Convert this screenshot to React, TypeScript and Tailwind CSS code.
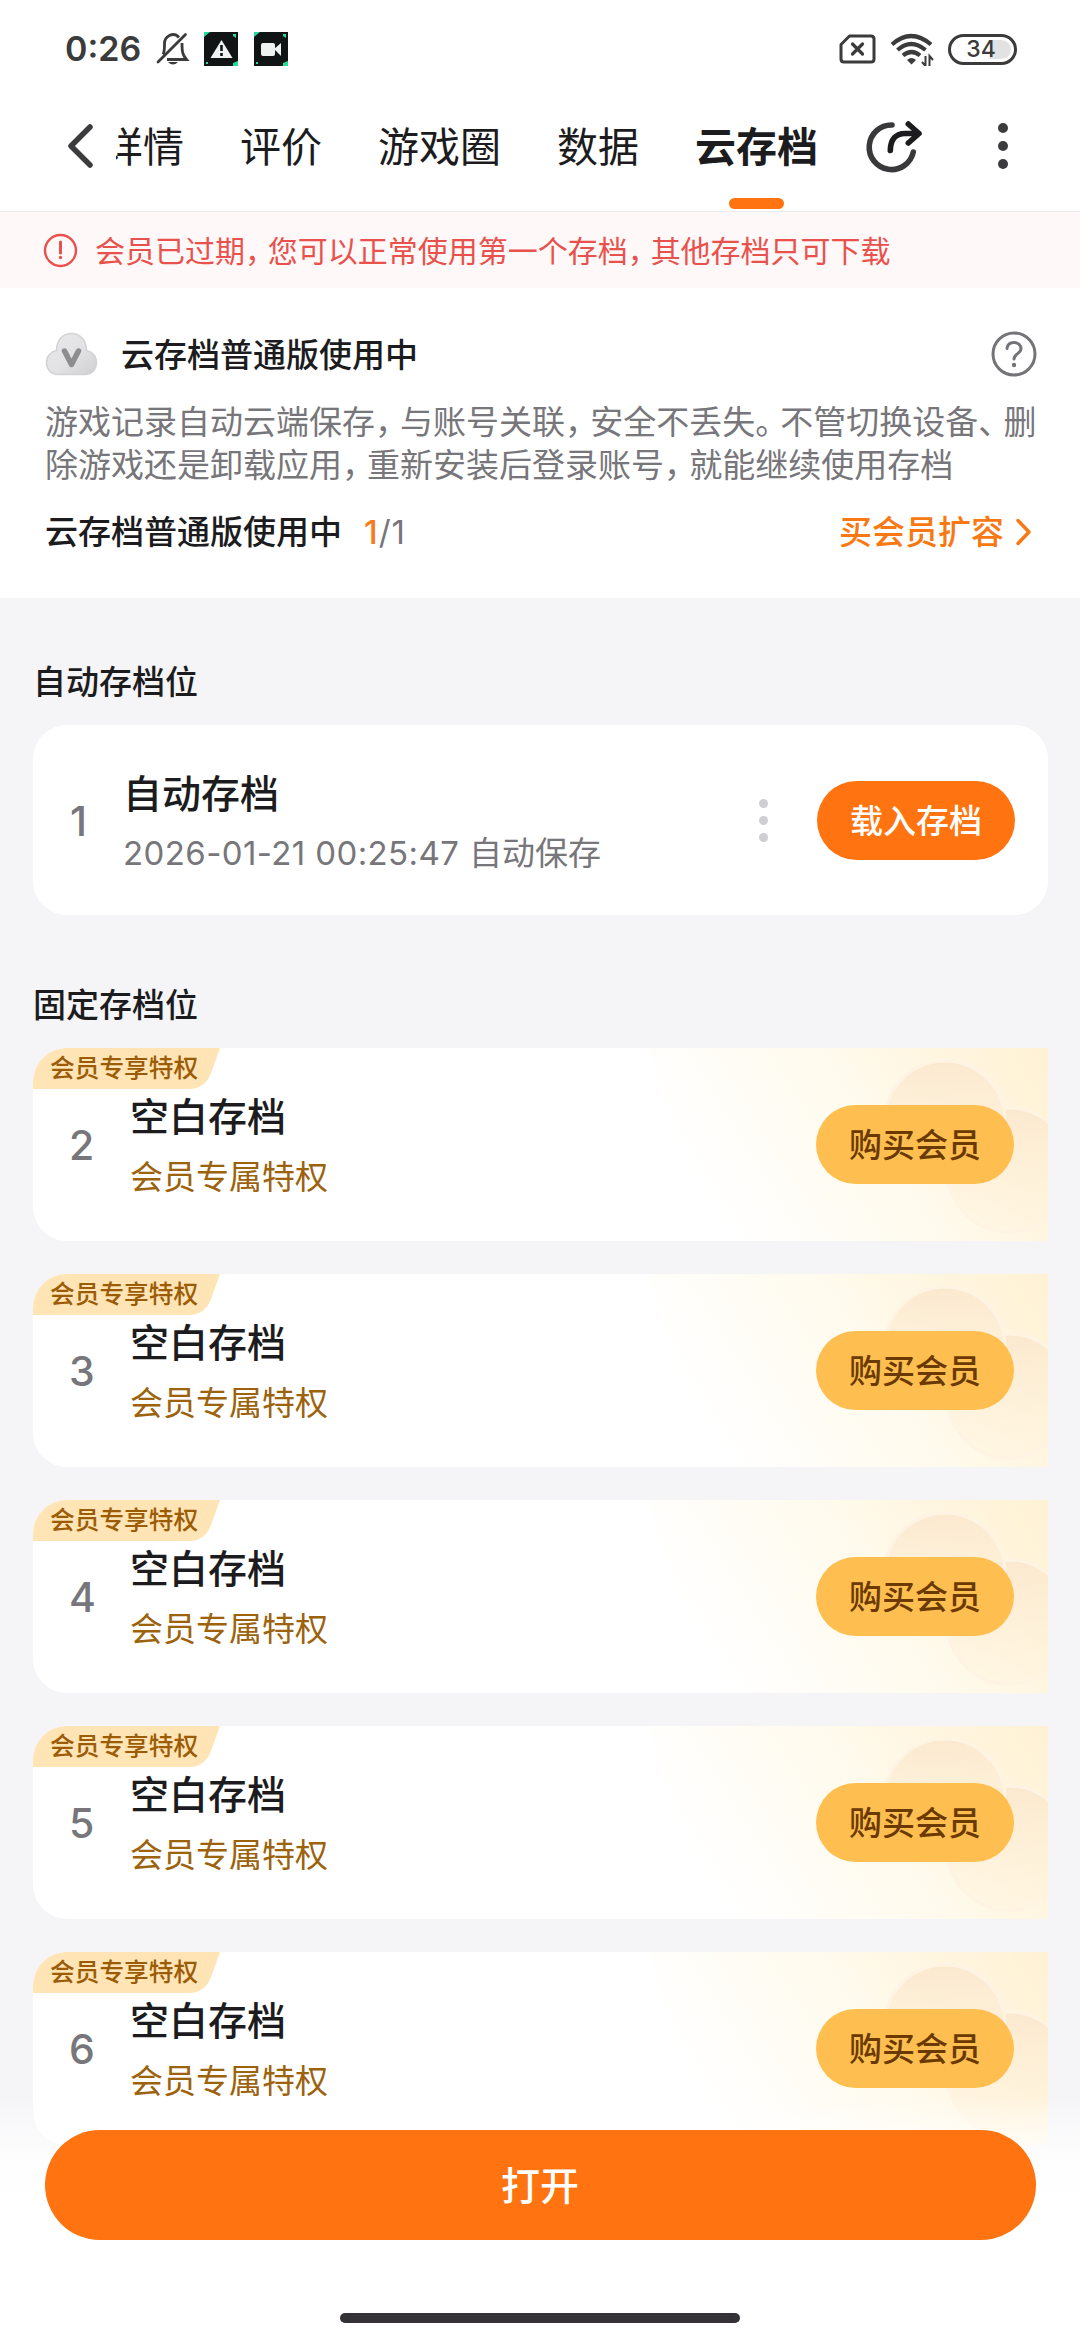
import React from "react"

interface SaveSlot {
  id: number
  title: string
  note: string
}

const tabs = ["详情", "评价", "游戏圈", "数据", "云存档"]

const slots: SaveSlot[] = [2, 3, 4, 5, 6].map((id) => ({
  id,
  title: "空白存档",
  note: "会员专属特权",
}))

// Full-width punctuation is set a bit tighter than the characters around it
const Tight: React.FC<{ text: string }> = ({ text }) => (
  <>
    {text.split(/([，。、])/).map((part, i) =>
      /[，。、]/.test(part) ? (
        <span key={i} className="-tracking-[0.24em]">
          {part}
        </span>
      ) : (
        part
      )
    )}
  </>
)

const StatusBar = () => (
  <div className="flex h-[98px] items-center pl-[65px] pr-[63px] text-[#3b3b3b]">
    <span className="w-[91px] text-[34px] font-semibold leading-[40px]">0:26</span>
    <svg className="h-[34px] w-[34px]" viewBox="0 0 34 34" fill="none" stroke="currentColor" strokeWidth="2.800">
      <path d="M2 30 29.500 2.500" strokeLinecap="round" />
      <path d="M7 22.500C8.500 20 8.500 17.500 8.500 13a8.500 9.500 0 0 1 14.500-7.500" />
      <path d="M26 11c0 9 .5 12 4.500 16.500H11" />
      <path d="M12 30h10q-5 5-10 0Z" fill="currentColor" stroke="none" />
    </svg>
    <svg className="ml-[14px] h-[34px] w-[34px]" viewBox="0 0 34 34">
      <path fill="#101414" d="M0 0h34v34H0z" />
      <path fill="#22dd96" d="M0 0h6L0 5zM34 34h-5v-3l5-2zM29 2h3v4l-3-2zM2 30h2v2H2z" />
      <path fill="#eef2f1" d="M17.500 8 28.500 26H6.500z" />
      <path stroke="#101414" strokeWidth="2.600" d="M17.500 13v6M17.500 21v3" />
    </svg>
    <svg className="ml-4 h-[34px] w-[34px]" viewBox="0 0 34 34">
      <path fill="#101414" d="M0 0h34v34H0z" />
      <path fill="#22dd96" d="M0 0h6L0 5zM34 34h-5v-3l5-2zM29 2h3v4l-3-2zM2 30h2v2H2z" />
      <rect x="7" y="11" width="14" height="13" rx="2" fill="#eef2f1" />
      <path fill="#eef2f1" d="m20 17 7-6v13z" />
    </svg>
    <div className="ml-auto flex items-center">
      <svg className="h-[30px] w-[37px]" viewBox="0 0 37 30" fill="none" stroke="currentColor" strokeWidth="3">
        <path d="M10.500 2H32q3 0 3 3v20q0 3-3 3H5q-3 0-3-3V10.500z" strokeLinejoin="round" />
        <path d="m13.500 10 10 10m0-10-10 10" strokeWidth="3.200" strokeLinecap="round" />
      </svg>
      <svg className="ml-[14px] h-[34px] w-[44px]" viewBox="0 0 44 34" fill="none" stroke="currentColor" strokeWidth="4.200">
        <path d="M2 12.500Q21-4.500 41 12.500M7.500 18Q21 6 35.500 18M13 23.500q8.500-7 17 0" />
        <path d="M17 28q4.500-4 9 0l-4.500 4.500z" fill="currentColor" stroke="none" />
        <path d="M35.500 24v10l-3.500-4M39.500 34V24l3.500 4" strokeWidth="2" />
      </svg>
      <div className="ml-[14px] flex h-[31px] w-[69px] items-center justify-center rounded-full border-[3px] border-current bg-[linear-gradient(to_right,#fff_62%,#e2e2e2_62%)] bg-clip-content p-[3px]">
        <span className="-ml-[3px] text-[23px] font-medium leading-[24px]">34</span>
      </div>
    </div>
  </div>
)

const TabBar = () => (
  <nav className="flex h-[114px] border-b border-[#ececee] pl-[66px]">
    <svg className="mt-[25px] h-[46px] w-[28px]" viewBox="0 0 28 46" fill="none" stroke="#3c3c3e" strokeWidth="5.500" strokeLinecap="round" strokeLinejoin="round">
      <path d="M24 4 5 23l19 19" />
    </svg>
    {/* the strip is scrolled, so the first tab slides under the back arrow */}
    <div className="ml-[22px] w-[702px] overflow-hidden">
      <div className="-ml-[14px] flex w-max gap-[56px] pt-[24px] text-[41px] leading-[50px] text-[#1c1c1e]">
        {tabs.map((tab) =>
          tab === "云存档" ? (
            <div key={tab} className="flex flex-col items-center">
              <span className="font-bold">{tab}</span>
              <i className="mt-[26px] h-[11px] w-[55px] rounded-full bg-[#ff7410]" />
            </div>
          ) : (
            <span key={tab}>{tab}</span>
          )
        )}
      </div>
    </div>
    <svg className="ml-[44px] mt-[19px] h-[58px] w-[62px]" viewBox="0 0 62 58" fill="none" stroke="#39393b" strokeWidth="5.600" strokeLinecap="round" strokeLinejoin="round">
      <path d="M30 8A22.300 22.300 0 1 0 51.300 35" />
      <g stroke="#1c1c1e">
        <path d="M28.300 33.500C28.500 22 34 16.500 43 16.500h13" />
        <path d="m46.300 7 10.700 9.500L46.300 26" />
      </g>
    </svg>
    <div className="ml-[74px] mt-[25px] flex flex-col gap-2">
      <i className="size-[10px] rounded-full bg-[#3c3c3e]" />
      <i className="size-[10px] rounded-full bg-[#3c3c3e]" />
      <i className="size-[10px] rounded-full bg-[#3c3c3e]" />
    </div>
  </nav>
)

const Notice = () => (
  <div className="flex h-[76px] items-center bg-[#fff8f8] pl-[43px] text-[#e9514c]">
    <svg className="size-[35px]" viewBox="0 0 35 35" fill="none" stroke="currentColor" strokeWidth="2.400">
      <circle cx="17.500" cy="17.500" r="15.500" />
      <path d="M17.500 9v11" strokeWidth="3" strokeLinecap="round" />
      <circle cx="17.500" cy="24.500" r="1.700" fill="currentColor" stroke="none" />
    </svg>
    <p className="ml-[17px] pt-px text-[30px] leading-[40px]">
      <Tight text="会员已过期，您可以正常使用第一个存档，其他存档只可下载" />
    </p>
  </div>
)

const PlanInfo = () => (
  <section className="h-[310px] bg-white pl-[45px] pr-[43px] pt-[43px]">
    <div className="flex h-[46px] items-center">
      <svg className="h-[44px] w-[53px]" viewBox="0 0 53 44">
        <defs>
          <linearGradient id="cloud" x1="0" y1="0" x2="1" y2="1">
            <stop offset="0" stopColor="#e9e8ea" />
            <stop offset=".55" stopColor="#e2e1e3" />
            <stop offset="1" stopColor="#cfced1" />
          </linearGradient>
        </defs>
        <path d="M13 42.500C6 42.500 1.500 37 1.500 30.500 1.500 24 6 19.500 11.500 18.500 11.500 8 18 1.500 26.500 1.500S41.500 8 41.500 18.500C47 19.500 51.500 24 51.500 30.500c0 6.500-4.500 12-11.500 12z" fill="url(#cloud)" stroke="#d3d2d5" strokeWidth="1.500" />
        <path d="m19.500 19 7 13.500 7-13.500" fill="none" stroke="#8d8c8f" strokeWidth="5.500" strokeLinecap="round" strokeLinejoin="round" />
      </svg>
      <h2 className="ml-[23px] pt-[2px] text-[33px] font-medium leading-[46px] text-[#1c1c1e]">云存档普通版使用中</h2>
      <svg className="ml-auto size-[46px]" viewBox="0 0 46 46" fill="none" stroke="#747377" strokeWidth="3" strokeLinecap="round">
        <circle cx="23" cy="23" r="21" />
        <path d="M16 17.500c.5-4.500 3.500-6 7-6s7 2.500 7 6.300c0 5-7 4.700-7 10.200" />
        <circle cx="23" cy="34" r="2.200" fill="#747377" stroke="none" />
      </svg>
    </div>
    <p className="mt-[24px] whitespace-nowrap text-[33px] leading-[43.300px] text-[#77767a]">
      <Tight text="游戏记录自动云端保存，与账号关联，安全不丢失。不管切换设备、删" />
      <br />
      <Tight text="除游戏还是卸载应用，重新安装后登录账号，就能继续使用存档" />
    </p>
    <div className="mt-[20px] flex h-[48px] items-center text-[33px] leading-[48px]">
      <span className="font-medium text-[#1c1c1e]">云存档普通版使用中</span>
      <span className="ml-[22px] text-[33px] tracking-[1px] text-[#77767a]">
        <b className="font-medium text-[#f57c1d]">1</b>/1
      </span>
      <span className="ml-auto font-medium text-[#f87814]">买会员扩容</span>
      <svg className="ml-[11px] mr-[5px] h-[28px] w-[17px]" viewBox="0 0 17 28" fill="none" stroke="#f87814" strokeWidth="3.400" strokeLinecap="round" strokeLinejoin="round">
        <path d="m3 2.500 11 11.500L3 25.500" />
      </svg>
    </div>
  </section>
)

const AutoSlot = () => (
  <div className="flex h-[190px] items-center rounded-[34px] bg-white pr-[33px]">
    <span className="w-[90px] pl-[37px] pt-[2px] text-[41px] font-medium leading-[50px] text-[#77767a]">1</span>
    <div className="pt-[2px]">
      <h4 className="text-[39px] font-medium leading-[54px] text-[#1c1c1e]">自动存档</h4>
      <p className="mt-[9px] text-[33px] leading-[46px] text-[#77767a]">
        <span className="tracking-[0.400px]">2026-01-21 00:25:47 </span>自动保存
      </p>
    </div>
    <div className="ml-auto mr-[49px] flex flex-col gap-2">
      <i className="size-[9px] rounded-full bg-[#cfced2]" />
      <i className="size-[9px] rounded-full bg-[#cfced2]" />
      <i className="size-[9px] rounded-full bg-[#cfced2]" />
    </div>
    <button className="h-[79px] w-[198px] rounded-full bg-[#ff7410] pt-[3px] text-[33px] font-medium text-white">载入存档</button>
  </div>
)

const SlotBackdrop = () => (
  <svg className="absolute right-0 top-0 h-[193px] w-[400px]" viewBox="0 0 400 193">
    <defs>
      <linearGradient id="glow" x1="0" y1=".3" x2="1" y2="0">
        <stop offset="0" stopColor="#fff" />
        <stop offset=".5" stopColor="#fffaec" />
        <stop offset="1" stopColor="#fff1d3" />
      </linearGradient>
      <linearGradient id="puff" x1="0" y1="0" x2="0" y2="1">
        <stop offset="0" stopColor="#fbe9cf" />
        <stop offset="1" stopColor="#fff3dc" stopOpacity=".3" />
      </linearGradient>
    </defs>
    <path fill="url(#glow)" d="M0 0h400v193H60z" />
    <circle cx="361" cy="122" r="62" fill="url(#puff)" stroke="#fff4e3" strokeWidth="3" />
    <circle cx="297" cy="73" r="60" fill="url(#puff)" stroke="#fff4e3" strokeWidth="3" />
  </svg>
)

const MemberSlot: React.FC<{ slot: SaveSlot }> = ({ slot }) => (
  <div className="relative h-[193px] overflow-hidden rounded-l-[34px] bg-white">
    <SlotBackdrop />
    <div className="absolute left-0 top-0">
      <svg className="h-[41px] w-[187px]" viewBox="0 0 187 41">
        <path fill="#ffe4b5" d="M0 0h187l-9 25q-6 16-22 16H0z" />
      </svg>
      <span className="absolute left-[17px] top-0 whitespace-nowrap text-[24.700px] font-medium leading-[41px] text-[#9c5c06]">会员专享特权</span>
    </div>
    <div className="relative flex h-full items-center pr-[34px]">
      <span className="w-[97px] pl-[36px] pt-px text-[41px] font-medium leading-[50px] text-[#77767a]">{slot.id}</span>
      <div>
        <h4 className="text-[39px] font-medium leading-[54px] text-[#1c1c1e]">{slot.title}</h4>
        <p className="mt-[10px] text-[33px] leading-[46px] text-[#9c620c]">{slot.note}</p>
      </div>
      <button className="ml-auto h-[79px] w-[198px] rounded-full bg-[#ffbf50] pt-[3px] text-[33px] font-medium text-[#6b3a03]">购买会员</button>
    </div>
  </div>
)

const OpenBar = () => (
  <div className="absolute inset-x-0 bottom-0 flex h-[244px] flex-col items-center bg-[linear-gradient(to_bottom,rgba(255,255,255,0),rgba(255,255,255,0.85)_60px,#fff_110px)] pt-[34px]">
    <button className="h-[110px] w-[991px] rounded-full bg-[#ff7410] pt-[3px] text-[39px] font-medium text-white">打开</button>
    <i className="mt-[73px] h-[10px] w-[400px] rounded-full bg-[#343236]" />
  </div>
)

const App = () => {
  return (
    <div className="relative h-[2340px] w-[1080px] overflow-hidden bg-[#f5f4f7] font-['Inter','Noto_Sans_CJK_SC',sans-serif]">
      <header className="bg-white">
        <StatusBar />
        <TabBar />
      </header>
      <Notice />
      <PlanInfo />
      <main className="pl-[33px] pr-[32px]">
        <h3 className="mt-[60px] text-[33px] font-medium leading-[48px] text-[#1c1c1e]">自动存档位</h3>
        <div className="mt-[19px]">
          <AutoSlot />
        </div>
        <h3 className="mt-[66px] text-[33px] font-medium leading-[48px] text-[#1c1c1e]">固定存档位</h3>
        <div className="mt-[19px] flex flex-col gap-[33px]">
          {slots.map((slot) => (
            <MemberSlot key={slot.id} slot={slot} />
          ))}
        </div>
      </main>
      <OpenBar />
    </div>
  )
}

export default App
